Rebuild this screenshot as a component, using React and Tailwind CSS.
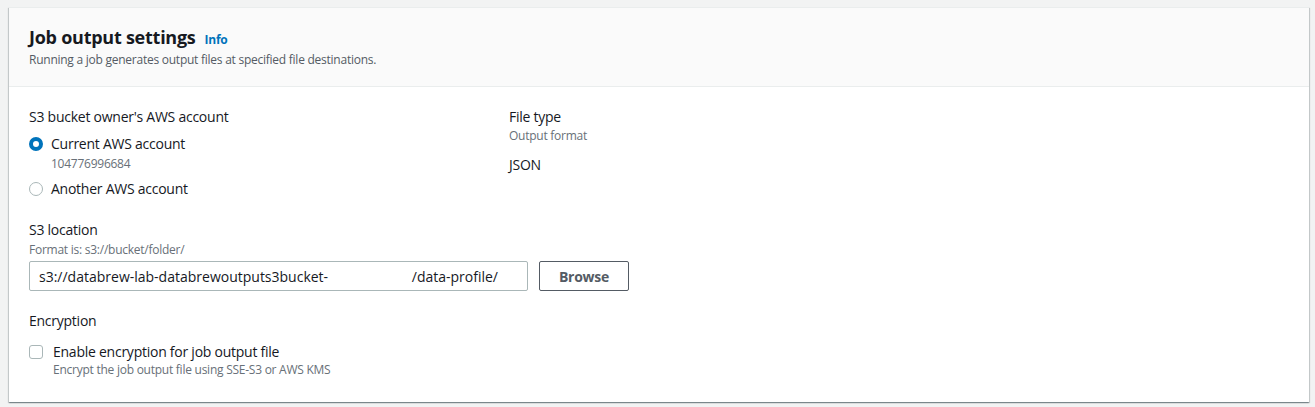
import React from 'react';

const font = { fontFamily: '"Open Sans", "Noto Sans", Arial, sans-serif' };

export default function App() {
  return (
    <div className="min-h-[407px] w-full bg-[#f2f3f3] pt-[7px] pl-[9px] pr-[6px] tracking-[-0.25px]" style={font}>
      <div className="bg-white border-t border-[#eaeded] shadow-[0_1px_1px_0_rgba(0,28,36,0.3),1px_1px_1px_0_rgba(0,28,36,0.15),-1px_1px_1px_0_rgba(0,28,36,0.15)]">
        {/* Header */}
        <div className="h-[79px] bg-[#fafafa] border-b border-[#eaeded] px-[20px] pt-[17px]">
          <div className="flex items-baseline gap-[9px]">
            <h2 className="text-[18px] leading-[24px] font-bold text-[#16191f]">Job output settings</h2>
            <a className="text-[12px] font-bold text-[#0073bb]">Info</a>
          </div>
          <p className="text-[12px] leading-[16px] text-[#545b64] mt-[3px]">
            Running a job generates output files at specified file destinations.
          </p>
        </div>

        {/* Body */}
        <div className="px-[20px] pt-[20px] pb-[24px] text-[#16191f]">
          <div className="grid grid-cols-[480px_1fr]">
            <div>
              <div className="text-[14px] leading-[20px]">S3 bucket owner's AWS account</div>
              <div className="mt-[7px] flex gap-[8px]">
                <span className="mt-[3px] w-[14px] h-[14px] rounded-full border-[4px] border-[#0073bb] bg-white shrink-0" />
                <div>
                  <div className="text-[14px] leading-[20px]">Current AWS account</div>
                  <div className="text-[12px] leading-[16px] text-[#687078] mt-[2px]">104776996684</div>
                </div>
              </div>
              <div className="mt-[7px] flex gap-[8px]">
                <span className="mt-[3px] w-[14px] h-[14px] rounded-full border border-[#aab7b8] bg-white shrink-0" />
                <div className="text-[14px] leading-[20px]">Another AWS account</div>
              </div>
            </div>
            <div>
              <div className="text-[14px] leading-[20px]">File type</div>
              <div className="text-[12px] leading-[16px] text-[#687078] mt-[1px]">Output format</div>
              <div className="mt-[11px] text-[14px] leading-[20px]">JSON</div>
            </div>
          </div>

          <div className="mt-[21px]">
            <div className="text-[14px] leading-[20px]">S3 location</div>
            <div className="text-[12px] leading-[16px] text-[#687078] mt-[2px]">Format is: s3://bucket/folder/</div>
            <div className="mt-[3px] flex gap-[11px]">
              <div className="w-[499px] h-[30px] border border-[#aab7b8] rounded-[2px] px-[9px] flex items-center text-[14px] tracking-normal whitespace-pre">
                s3://databrew-lab-databrewoutputs3bucket-                       /data-profile/
              </div>
              <button className="w-[90px] h-[30px] border border-[#545b64] rounded-[2px] bg-white text-[14px] font-bold text-[#545b64]">
                Browse
              </button>
            </div>
          </div>

          <div className="mt-[20px]">
            <div className="text-[14px] leading-[20px]">Encryption</div>
            <div className="mt-[11px] flex gap-[10px]">
              <span className="mt-[3px] w-[14px] h-[14px] rounded-[3px] border border-[#aab7b8] bg-white shrink-0" />
              <div>
                <div className="text-[14px] leading-[20px]">Enable encryption for job output file</div>
                <div className="text-[12px] leading-[16px] text-[#687078]">Encrypt the job output file using SSE-S3 or AWS KMS</div>
              </div>
            </div>
          </div>
        </div>
      </div>
    </div>
  );
}
